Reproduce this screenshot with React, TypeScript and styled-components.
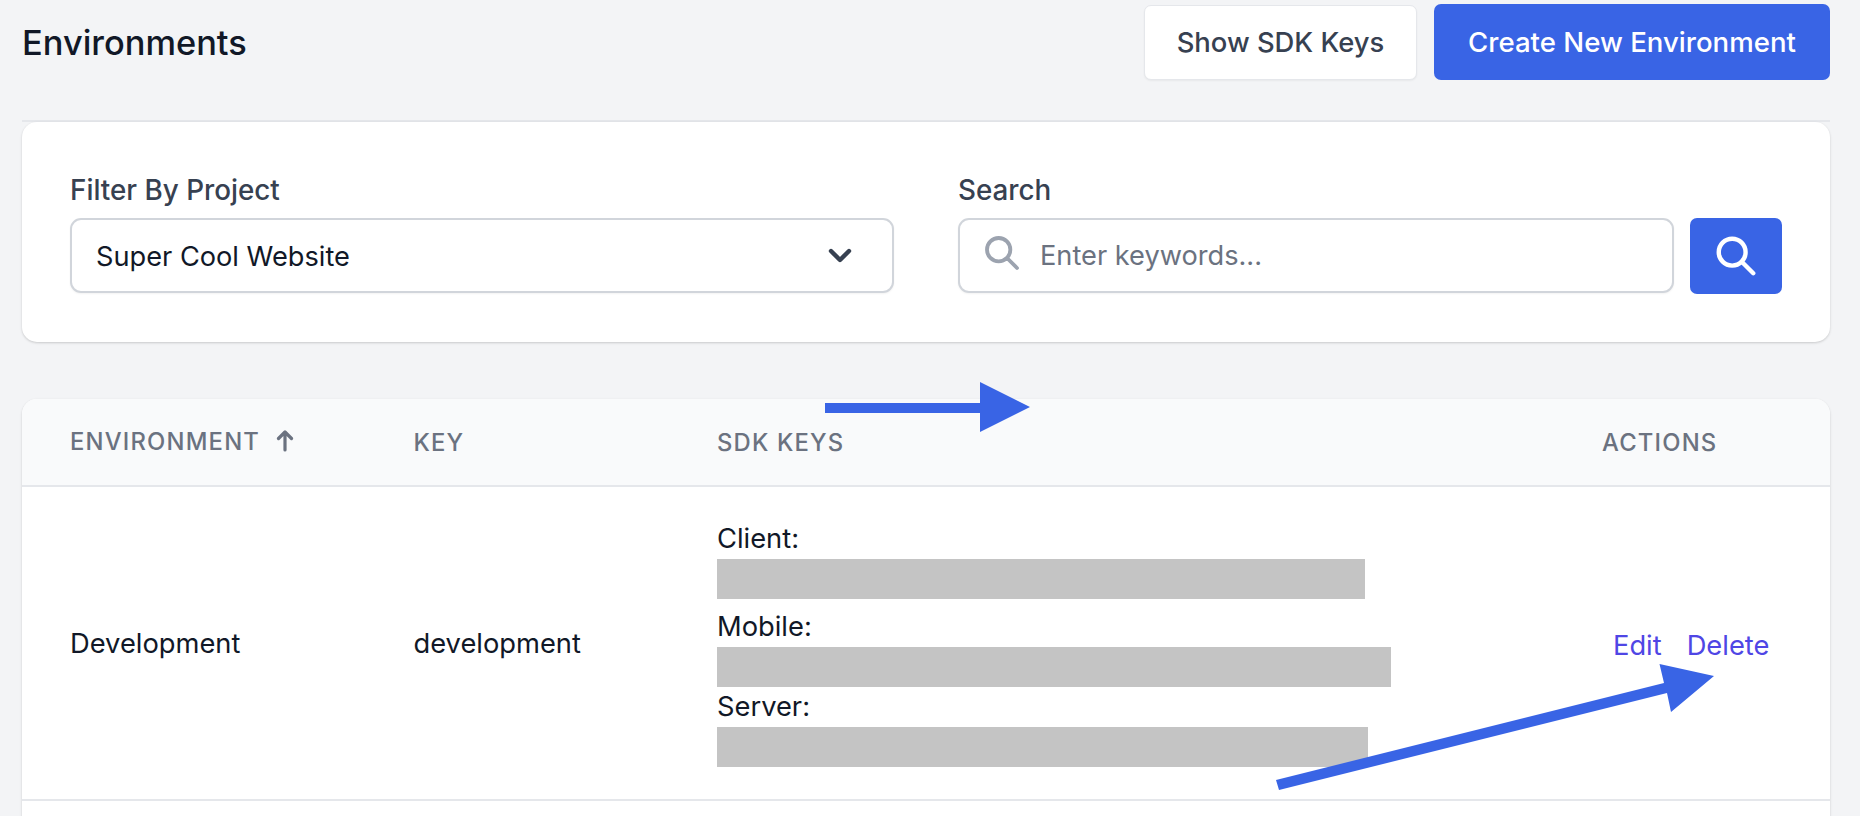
import React from "react";
import styled, { createGlobalStyle } from "styled-components";

const Global = createGlobalStyle`
  html, body { margin: 0; padding: 0; height: 816px; overflow: hidden; background: #f3f4f6; }
  * { box-sizing: border-box; }
  body { font-family: Inter, "Noto Sans", sans-serif; color: #111827; }
`;

const Page = styled.div`
  position: relative;
  width: 1860px;
  height: 816px;
  overflow: hidden;
  padding: 0 30px 0 22px;
`;

const Header = styled.header`
  height: 122px;
  padding-bottom: 2px;
  border-bottom: 2px solid #e5e7eb;
  display: flex;
  align-items: flex-start;
  justify-content: space-between;
`;

const Title = styled.h1`
  margin: 0;
  padding-top: 22px;
  font-size: 34.4px;
  line-height: 42px;
  font-weight: 500;
  color: #111827;
`;

const HeaderActions = styled.div`
  display: flex;
  align-items: center;
  gap: 17px;
  padding-top: 4px;
`;

const SecondaryButton = styled.button`
  width: 273px;
  height: 75px;
  border: 1px solid #e5e7eb;
  border-radius: 7px;
  background: #fff;
  color: #374151;
  font: 500 27.4px Inter, sans-serif;
  box-shadow: 0 1px 2px rgba(0, 0, 0, 0.05);
`;

const PrimaryButton = styled.button`
  width: 396px;
  height: 76px;
  border: 0;
  border-radius: 7px;
  background: #3964e5;
  color: #fff;
  font: 500 27.6px Inter, sans-serif;
`;

const FilterCard = styled.section`
  height: 220px;
  padding: 48px 48px 0;
  background: #fff;
  border-radius: 15px;
  box-shadow: 0 1px 3px rgba(0, 0, 0, 0.12), 0 1px 2px rgba(0, 0, 0, 0.06);
  display: grid;
  grid-template-columns: 824px 824px;
  column-gap: 64px;
  align-items: start;
`;

const Field = styled.div`
  display: flex;
  flex-direction: column;
`;

const Label = styled.label`
  height: 48px;
  padding-top: 1px;
  font-size: 27.8px;
  line-height: 38px;
  font-weight: 500;
  color: #374151;
`;

const SelectBox = styled.div`
  height: 75px;
  padding: 2px 40px 0 24px;
  display: flex;
  align-items: center;
  justify-content: space-between;
  border: 2px solid #d1d5db;
  border-radius: 11px;
  background: #fff;
  font-size: 27.2px;
  color: #111827;
  box-shadow: 0 1px 2px rgba(0, 0, 0, 0.05);
`;

const SearchRow = styled.div`
  display: flex;
  gap: 16px;
`;

const InputWrap = styled.div`
  position: relative;
  width: 716px;
  height: 75px;
`;

const SearchInput = styled.input`
  width: 100%;
  height: 100%;
  padding: 0 20px 0 80px;
  border: 2px solid #d1d5db;
  border-radius: 11px;
  background: #fff;
  font: 400 27.2px Inter, sans-serif;
  color: #111827;
  outline: none;
  box-shadow: 0 1px 2px rgba(0, 0, 0, 0.05);
  &::placeholder { color: #6b7280; opacity: 1; }
`;

const InputIcon = styled.svg`
  position: absolute;
  left: 24px;
  top: 15px;
  width: 40px;
  height: 40px;
  fill: none;
  stroke: #9ca3af;
  stroke-width: 2.3;
  stroke-linecap: round;
  stroke-linejoin: round;
`;

const SearchButton = styled.button`
  width: 92px;
  height: 76px;
  border: 0;
  border-radius: 7px;
  background: #3964e5;
  display: flex;
  align-items: center;
  justify-content: center;
  padding: 0;
`;

const ButtonIcon = styled.svg`
  width: 46px;
  height: 46px;
  fill: none;
  stroke: #fff;
  stroke-width: 2.3;
  stroke-linecap: round;
  stroke-linejoin: round;
`;

const Chevron = styled.svg`
  width: 24px;
  height: 16px;
  margin-top: -2px;
  fill: none;
  stroke: #374151;
  stroke-width: 4.4;
  stroke-linecap: round;
  stroke-linejoin: round;
`;

const TableCard = styled.section`
  margin-top: 57px;
  background: #fff;
  border-radius: 15px 15px 0 0;
  box-shadow: 0 1px 3px rgba(0, 0, 0, 0.12), 0 1px 2px rgba(0, 0, 0, 0.06);
  overflow: hidden;
`;

const columns = "391.5px 303.5px 885px 1fr";

const HeadRow = styled.div`
  height: 88px;
  display: grid;
  grid-template-columns: ${columns};
  align-items: center;
  background: #f9fafb;
  border-bottom: 2px solid #e5e7eb;
`;

const HeadCell = styled.div<{ $first?: boolean }>`
  padding-left: ${(p) => (p.$first ? "48px" : "0")};
  font-size: 23.8px;
  font-weight: 500;
  letter-spacing: 0.05em;
  text-transform: uppercase;
  color: #6b7280;
  white-space: nowrap;
  display: flex;
  align-items: center;
  gap: 16px;
  margin-top: ${(p) => (p.$first ? "-2px" : "0")};
`;

const SortArrow = styled.svg`
  width: 18px;
  height: 22px;
  fill: none;
  stroke: #6b7280;
  stroke-width: 3.2;
  stroke-linecap: round;
  stroke-linejoin: round;
`;

const BodyRow = styled.div`
  height: 314px;
  display: grid;
  grid-template-columns: ${columns};
  align-items: center;
  border-bottom: 2px solid #e5e7eb;
  font-size: 27.3px;
  color: #111827;
`;

const NameCell = styled.div`
  padding-left: 48px;
`;

const KeysCell = styled.div`
  display: flex;
  flex-direction: column;
`;

const KeyLabel = styled.div<{ $spaced?: boolean }>`
  height: 40px;
  line-height: 40px;
  margin-top: ${(p) => (p.$spaced ? "8px" : "0")};
`;

const RedactedBar = styled.div<{ $width: number }>`
  width: ${(p) => p.$width}px;
  height: 40px;
  background: #c4c4c4;
`;

const ActionsCell = styled.div`
  padding-left: 11px;
  display: flex;
  gap: 25px;
  margin-top: 5px;
`;

const ActionLink = styled.a`
  color: #4f46e5;
  font-weight: 400;
  text-decoration: none;
`;

const EmptyRow = styled.div`
  height: 60px;
  background: #fff;
`;

const Annotations = styled.svg`
  position: absolute;
  left: 0;
  top: 0;
  width: 1860px;
  height: 816px;
  pointer-events: none;
`;

const searchPath = "M21 21l-6-6m2-5a7 7 0 11-14 0 7 7 0 0114 0z";

export default function App() {
  return (
    <Page>
      <Global />
      <Header>
        <Title>Environments</Title>
        <HeaderActions>
          <SecondaryButton>Show SDK Keys</SecondaryButton>
          <PrimaryButton>Create New Environment</PrimaryButton>
        </HeaderActions>
      </Header>

      <FilterCard>
        <Field>
          <Label>Filter By Project</Label>
          <SelectBox>
            <span>Super Cool Website</span>
            <Chevron viewBox="0 0 24 16">
              <path d="M3 3l9 9 9-9" />
            </Chevron>
          </SelectBox>
        </Field>
        <Field>
          <Label>Search</Label>
          <SearchRow>
            <InputWrap>
              <SearchInput placeholder="Enter keywords..." />
              <InputIcon viewBox="0 0 24 24">
                <path d={searchPath} />
              </InputIcon>
            </InputWrap>
            <SearchButton aria-label="Search">
              <ButtonIcon viewBox="0 0 24 24">
                <path d={searchPath} />
              </ButtonIcon>
            </SearchButton>
          </SearchRow>
        </Field>
      </FilterCard>

      <TableCard>
        <HeadRow>
          <HeadCell $first>
            Environment
            <SortArrow viewBox="0 0 18 22">
              <path d="M9 20V2M2.5 8.5L9 2l6.5 6.5" />
            </SortArrow>
          </HeadCell>
          <HeadCell>Key</HeadCell>
          <HeadCell>SDK Keys</HeadCell>
          <HeadCell>Actions</HeadCell>
        </HeadRow>
        <BodyRow>
          <NameCell>Development</NameCell>
          <div>development</div>
          <KeysCell>
            <KeyLabel>Client:</KeyLabel>
            <RedactedBar $width={648} />
            <KeyLabel $spaced>Mobile:</KeyLabel>
            <RedactedBar $width={674} />
            <KeyLabel>Server:</KeyLabel>
            <RedactedBar $width={651} />
          </KeysCell>
          <ActionsCell>
            <ActionLink href="#">Edit</ActionLink>
            <ActionLink href="#">Delete</ActionLink>
          </ActionsCell>
        </BodyRow>
        <EmptyRow />
      </TableCard>

      <Annotations viewBox="0 0 1860 816">
        <polygon fill="#3964e5" points="825,403 980,403 980,382 1030,407 980,432 980,413 825,413" />
        <polygon
          fill="#3964e5"
          points="1276,780 1664,683 1659.5,664 1714,676 1671,712 1667,693 1279,790"
        />
      </Annotations>
    </Page>
  );
}
